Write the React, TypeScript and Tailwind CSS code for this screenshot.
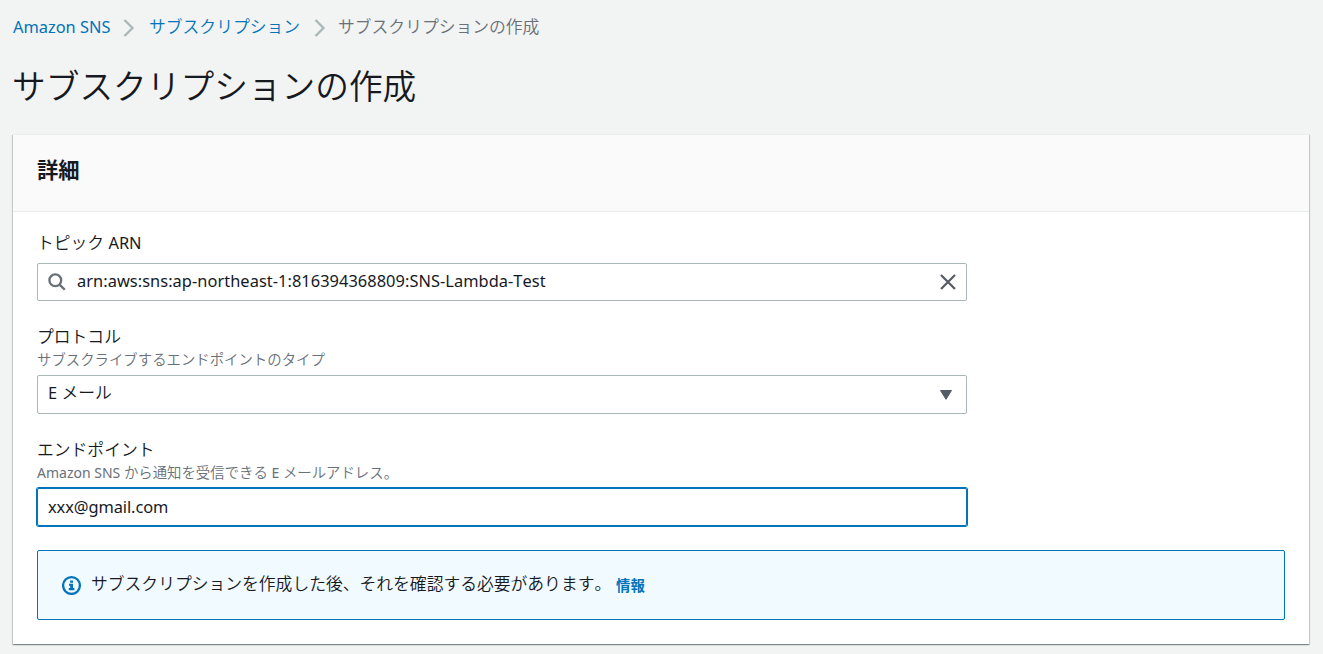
import React from "react";

const FONT =
  "font-['Noto_Sans','Noto_Sans_CJK_JP',sans-serif] [font-kerning:none]";
const JA = "font-['Noto_Sans_CJK_JP',sans-serif] font-[350]";

function Separator() {
  return (
    <svg className="mt-0.5 h-[18px] w-3 shrink-0" viewBox="0 0 12 18" fill="none">
      <path d="M1.5 1L9.5 9L1.5 17" stroke="#aab7b8" strokeWidth="2.3" />
    </svg>
  );
}

function SearchIcon() {
  return (
    <svg className="h-[18px] w-[18px]" viewBox="0 0 18 18" fill="none">
      <circle cx="7.3" cy="7.3" r="5.9" stroke="#687078" strokeWidth="2.3" />
      <path d="M11.6 11.6L16.8 16.8" stroke="#687078" strokeWidth="2.3" />
    </svg>
  );
}

function CloseIcon() {
  return (
    <svg className="h-4 w-4" viewBox="0 0 16 16" fill="none">
      <path d="M1 1L15 15M15 1L1 15" stroke="#545b64" strokeWidth="2.2" />
    </svg>
  );
}

function InfoIcon() {
  return (
    <svg className="h-5 w-5 shrink-0" viewBox="0 0 20 20" fill="none">
      <circle cx="9.5" cy="10.5" r="8.4" stroke="#0073bb" strokeWidth="2.3" />
      <path
        d="M8.1 5.4H11V7.8H8.1ZM7 8.8H11V13H12.4V15.2H6.8V13H8.2V10.8H7Z"
        fill="#0073bb"
      />
    </svg>
  );
}

export default function App() {
  return (
    <div
      className={`h-[654px] w-[1323px] overflow-hidden bg-[#f2f3f3] text-[16.8px] whitespace-nowrap text-[#16191f] ${FONT}`}
    >
      {/* パンくずリスト */}
      <nav className="flex h-[53px] items-center pl-[13px] leading-[53px]">
        <a className="w-[98px] text-[16.4px] text-[#0073bb]">Amazon SNS</a>
        <div className="ml-3 flex pt-px">
          <Separator />
        </div>
        <a className={`ml-[14px] w-[151px] text-[#0073bb] ${JA}`}>
          サブスクリプション
        </a>
        <div className="ml-[14px] flex pt-px">
          <Separator />
        </div>
        <span className={`ml-3 text-[#687078] ${JA}`}>
          サブスクリプションの作成
        </span>
      </nav>

      <h1 className={`h-[81px] pl-3 text-[33.7px] leading-[64px] ${JA}`}>
        サブスクリプションの作成
      </h1>

      {/* 詳細パネル */}
      <main className="mr-[14px] ml-[13px] h-[510px] bg-white shadow-[0_1px_1px_0_rgba(0,28,36,0.3),1px_1px_1px_0_rgba(0,28,36,0.15),-1px_1px_1px_0_rgba(0,28,36,0.15)]">
        <header className="h-[78px] border-t border-b border-[#eaeded] bg-[#fafafa] px-6">
          <h2 className="font-['Noto_Sans_CJK_JP',sans-serif] text-[21.3px] leading-[67px] font-bold">
            詳細
          </h2>
        </header>

        <div className="px-6">
          <section className="w-[930px] pt-[17px]">
            <label className="block h-[34px] leading-[27px]">
              <span className={JA}>トピック</span>
              <span className="text-[16.4px]"> ARN</span>
            </label>
            <div className="flex h-[38px] items-center rounded-[2px] border border-[#aab7b8] pr-[10px] pl-[10px]">
              <SearchIcon />
              <span className="ml-[11px] flex-1 pb-0.5 text-[16.4px] tracking-[0.045px]">
                arn:aws:sns:ap-northeast-1:816394368809:SNS-Lambda-Test
              </span>
              <CloseIcon />
            </div>
          </section>

          <section className="w-[930px] pt-[23px]">
            <label className={`block h-[25px] leading-[25px] ${JA}`}>
              プロトコル
            </label>
            <p className={`h-[26px] text-[14.4px] leading-[20px] text-[#687078] ${JA}`}>
              サブスクライブするエンドポイントのタイプ
            </p>
            <div className="flex h-[39px] items-center justify-between rounded-[2px] border border-[#aab7b8] pr-[14px] pl-[10px]">
              <span className="pb-1">
                <span className="text-[16.4px]">E </span>
                <span className={JA}>メール</span>
              </span>
              <svg className="h-[10px] w-3" viewBox="0 0 12 10">
                <path d="M0.5 0.5H11.5L6 9.3Z" fill="#545b64" stroke="#545b64" />
              </svg>
            </div>
          </section>

          <section className="w-[930px] pt-[23px]">
            <label className={`block h-[25px] leading-[25px] ${JA}`}>
              エンドポイント
            </label>
            <p className="h-[26px] text-[14.4px] leading-[20px] text-[#687078]">
              <span className="text-[14px]">Amazon SNS </span>
              <span className={JA}>から通知を受信できる</span>
              <span className="text-[14px]"> E </span>
              <span className={JA}>メールアドレス。</span>
            </p>
            <div className="flex h-[38px] items-center rounded-[2px] border border-[#0073bb] pl-[10px] shadow-[0_0_0_1px_#0073bb]">
              <span className="text-[16.4px] tracking-[-0.08px]">
                xxx@gmail.com
              </span>
            </div>
          </section>

          {/* 確認のお知らせ */}
          <div className="mt-6 flex h-[70px] items-center rounded-[2px] border border-[#0073bb] bg-[#f1faff] pl-6">
            <InfoIcon />
            <span className={`ml-[9px] w-[525px] pb-0.5 ${JA}`}>
              サブスクリプションを作成した後、それを確認する必要があります。
            </span>
            <a className="font-['Noto_Sans_CJK_JP',sans-serif] text-[14.4px] font-bold text-[#0073bb]">
              情報
            </a>
          </div>
        </div>
      </main>
    </div>
  );
}
